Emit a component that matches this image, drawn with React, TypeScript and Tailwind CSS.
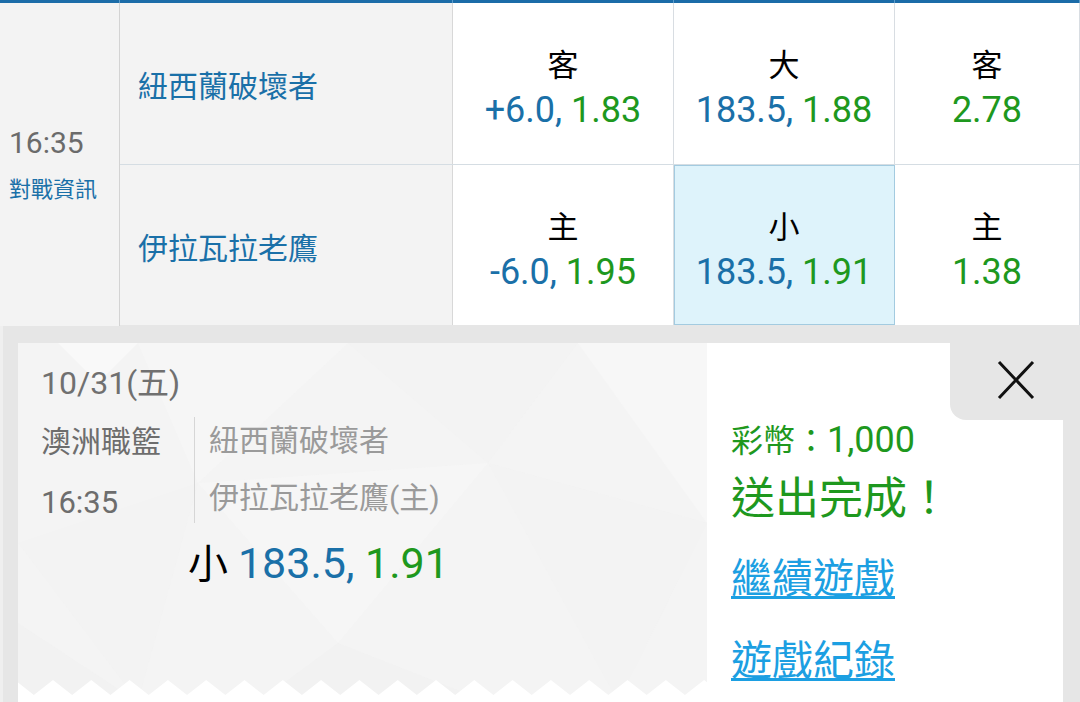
import React from "react";

const BLUE = "text-[#1a70a8]";
const GREEN = "text-[#1e981e]";

function OddsCell({
  label,
  a,
  b,
  highlight,
  w,
}: {
  label: string;
  a?: string;
  b: string;
  highlight?: boolean;
  w: string;
}) {
  return (
    <div
      className={`${w} h-full flex flex-col items-center justify-center pt-[13px] border-r ${
        highlight ? "bg-[#def3fb] border-[#a3cbe0] outline outline-1 outline-[#a3cbe0] -outline-offset-1" : "bg-white border-[#d8dde2]"
      }`}
    >
      <div className="text-[31px] leading-[40px] text-black">{label}</div>
      <div className="text-[36px] leading-[48px] whitespace-nowrap">
        {a && <span className={BLUE}>{a}, </span>}
        <span className={GREEN}>{b}</span>
      </div>
    </div>
  );
}

function Zigzag() {
  const period = 38.3;
  let d = "M0 22 L0 15 ";
  for (let i = -1; i < 20; i++) {
    const tip = 35 + i * period;
    d += `L${tip - period / 2} 15 L${tip} 0 L${tip + period / 2} 15 `;
  }
  d += "L700 15 L700 22 Z";
  return (
    <svg className="block w-full h-[22px]" viewBox="0 0 689 22" preserveAspectRatio="none">
      <path d={d} fill="#ffffff" />
    </svg>
  );
}

function Texture() {
  return (
    <svg className="absolute inset-0 w-full h-full" viewBox="0 0 689 359" preserveAspectRatio="none">
      <polygon points="40,0 120,0 80,40" fill="#fafafa" opacity="0.8" />
      <polygon points="120,0 330,0 180,140" fill="#f6f6f6" opacity="0.8" />
      <polygon points="330,0 560,0 470,120" fill="#f2f2f2" opacity="0.6" />
      <polygon points="560,0 689,0 689,180" fill="#f7f7f7" opacity="0.9" />
      <polygon points="0,200 180,140 120,359" fill="#f1f1f1" opacity="0.6" />
      <polygon points="180,140 470,120 320,300" fill="#f6f6f6" opacity="0.7" />
      <polygon points="470,120 689,180 600,359" fill="#f2f2f2" opacity="0.6" />
      <polygon points="320,300 470,359 240,359" fill="#f0f0f0" opacity="0.6" />
      <polygon points="0,359 120,359 0,280" fill="#f0f0f0" opacity="0.6" />
    </svg>
  );
}

export default function App() {
  return (
    <div className="w-[1080px] h-[702px] overflow-hidden bg-[#e6e6e6] font-['Roboto','Noto_Sans_CJK_TC',sans-serif]">
      {/* top bar */}
      <div className="flex h-[3px]">
        <div className="w-[120px] bg-[#1b6ca8] border-r border-[#5c9ccc]" />
        <div className="w-[333px] bg-[#1b6ca8] border-r border-[#5c9ccc]" />
        <div className="w-[221px] bg-[#1b6ca8] border-r border-[#5c9ccc]" />
        <div className="w-[221px] bg-[#1b6ca8] border-r border-[#5c9ccc]" />
        <div className="w-[185px] bg-[#1b6ca8] border-r border-[#5c9ccc]" />
      </div>

      {/* table */}
      <div className="flex h-[323px]">
        <div className="w-[120px] h-full bg-[#f3f3f3] border-r border-[#d3d3d3] flex flex-col justify-center pl-[9px]">
          <div className="text-[30px] leading-[36px] text-[#6b6b6b]">16:35</div>
          <div className="text-[22px] leading-[28px] mt-[15px] text-[#1a70a8]">對戰資訊</div>
        </div>
        <div className="flex-1 flex flex-col">
          <div className="flex h-[162px] border-b border-[#d5dde3]">
            <div className={`w-[333px] h-full bg-[#f3f3f3] border-r border-[#d8d8d8] flex items-center pl-[18px] pt-[6px] text-[30px] ${BLUE}`}>
              紐西蘭破壞者
            </div>
            <OddsCell w="w-[221px]" label="客" a="+6.0" b="1.83" />
            <OddsCell w="w-[221px]" label="大" a="183.5" b="1.88" />
            <OddsCell w="w-[185px]" label="客" b="2.78" />
          </div>
          <div className="flex h-[160px]">
            <div className={`w-[333px] h-full bg-[#f3f3f3] border-r border-[#d8d8d8] flex items-center pl-[18px] pt-[6px] text-[30px] ${BLUE}`}>
              伊拉瓦拉老鷹
            </div>
            <OddsCell w="w-[221px]" label="主" a="-6.0" b="1.95" />
            <OddsCell w="w-[221px]" label="小" a="183.5" b="1.91" highlight />
            <OddsCell w="w-[185px]" label="主" b="1.38" />
          </div>
        </div>
      </div>

      {/* result panel area */}
      <div className="h-[376px] pt-[17px] pl-[15px] pr-[17px] border-l-[3px] border-[#efefef]">
        <div className="flex h-[359px]">
          {/* left ticket */}
          <div className="relative w-[689px] h-full bg-[#f4f4f4] overflow-hidden flex flex-col">
            <Texture />
            <div className="relative flex-1 pl-[23px] pt-[20px]">
              <div className="text-[32px] leading-[40px] text-[#707070]">10/31(五)</div>
              <div className="flex mt-[14px] h-[106px]">
                <div className="w-[153px] pt-[5px]">
                  <div className="text-[30px] leading-[40px] text-[#6d6d6d]">澳洲職籃</div>
                  <div className="text-[31px] leading-[40px] mt-[21px] text-[#6d6d6d]">16:35</div>
                </div>
                <div className="border-l border-[#d6d6d6] pl-[14px] pt-[4px]">
                  <div className="text-[30px] leading-[40px] text-[#9a9a9a]">紐西蘭破壞者</div>
                  <div className="text-[30px] leading-[40px] mt-[17px] text-[#9a9a9a]">伊拉瓦拉老鷹(主)</div>
                </div>
              </div>
              <div className="mt-[16px] pl-[147px] leading-[48px] whitespace-nowrap">
                <span className="text-[40px] text-black">小 </span>
                <span className={`text-[43px] ${BLUE}`}>183.5, </span>
                <span className={`text-[43px] ${GREEN}`}>1.91</span>
              </div>
            </div>
            <div className="relative">
              <Zigzag />
            </div>
          </div>

          {/* right white */}
          <div className="relative flex-1 h-full bg-white pl-[24px] pt-[77px]">
            <div className="absolute top-0 right-0 w-[113px] h-[77px] bg-[#e6e6e6] rounded-bl-[16px] flex items-start justify-start pl-[47px] pt-[17px]">
              <svg width="38" height="40" viewBox="0 0 38 40">
                <path d="M2 2 L36 38 M36 2 L2 38" stroke="#111" strokeWidth="3" fill="none" />
              </svg>
            </div>
            <div className={`text-[32px] leading-[40px] whitespace-nowrap ${GREEN}`}>
              彩幣：<span className="text-[36px]">1,000</span>
            </div>
            <div className={`text-[44px] leading-[50px] mt-[13px] ${GREEN}`}>送出完成！</div>
            <div className="text-[41px] leading-[50px] mt-[30px] text-[#1c9fe2] underline decoration-[3px] underline-offset-[3px]">
              繼續遊戲
            </div>
            <div className="text-[41px] leading-[50px] mt-[32px] text-[#1c9fe2] underline decoration-[3px] underline-offset-[3px]">
              遊戲紀錄
            </div>
          </div>
        </div>
      </div>
    </div>
  );
}
